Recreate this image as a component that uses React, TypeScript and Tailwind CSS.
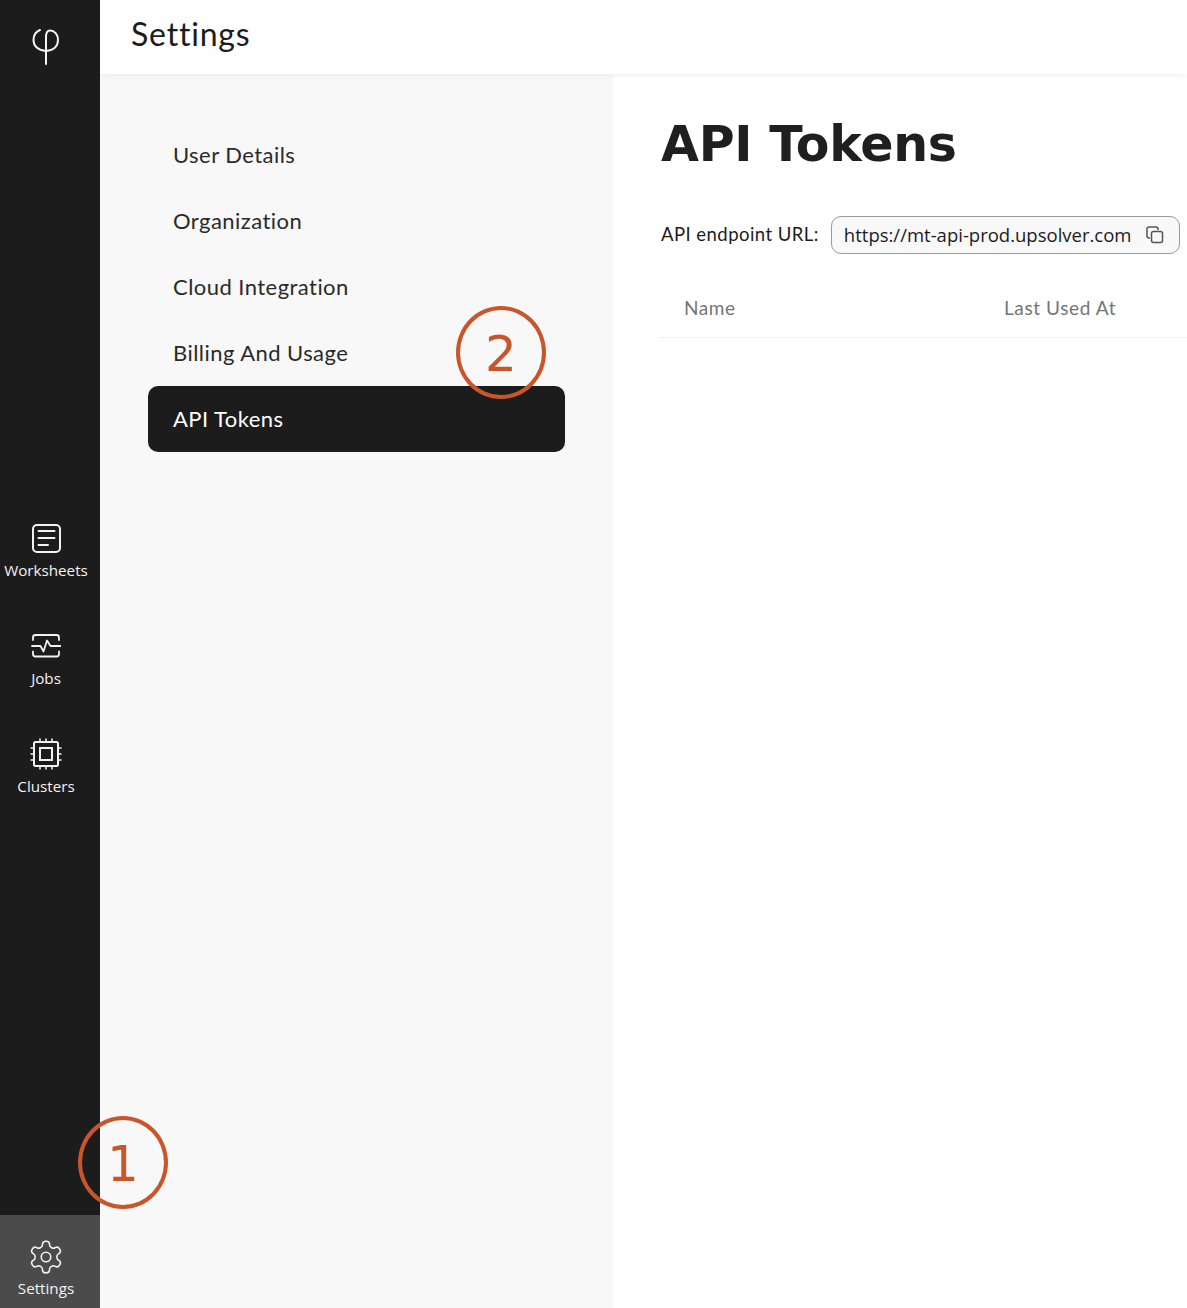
import React from "react";

const Callout = ({ n, className }: { n: string; className: string }) => (
  <div className={`absolute w-[90px] h-[93px] pt-[2px] rounded-[50%] border-[4px] border-[#c9552b] flex items-center justify-center text-[#c9552b] text-[50px] leading-none font-['DejaVu_Sans',sans-serif] font-normal ${className}`}>
    {n}
  </div>
);

const NavIcon = ({ label, children, active, className }: { label: string; children: React.ReactNode; active?: boolean; className: string }) => (
  <div className={`w-[100px] pr-[8px] flex flex-col items-center text-[#f2f2f2] ${active ? "bg-[#4b4b4b]" : ""} ${className}`}>
    {children}
    <span className="text-[15.2px] leading-[20px] font-['Open_Sans',sans-serif] whitespace-nowrap">{label}</span>
  </div>
);

const items = ["User Details", "Organization", "Cloud Integration", "Billing And Usage", "API Tokens"];

export default function App() {
  return (
    <div className="relative flex w-[1187px] h-[1308px] overflow-hidden bg-white font-['Lato',sans-serif] text-[#1c1c1c]">
      <aside className="w-[100px] shrink-0 bg-[#1c1c1c] flex flex-col">
        <div className="h-[522px] pt-[28px] pr-[8px] flex justify-center">
          <svg width="30" height="38" viewBox="0 0 30 38" fill="none" stroke="#f4f4f4" strokeWidth="2" strokeLinecap="round">
            <path d="M9 2C4 4 2.500 8 2.500 12C2.500 18 7 22.500 15 23C23 22.500 27 18 27 12C27 6.500 23.500 2.500 19 2.500C16.500 2.500 15 5 15 9V36" />
          </svg>
        </div>
        <NavIcon label="Worksheets" className="h-[108px] pt-[1px]">
          <svg width="30" height="30" viewBox="0 0 30 30" fill="none" stroke="#f2f2f2" strokeWidth="2" strokeLinecap="round" className="mb-[7px]">
            <rect x="2" y="2" width="27" height="27" rx="4" />
            <path d="M7.500 8H23.500M7.500 15H23.500M7.500 22H17" />
          </svg>
        </NavIcon>
        <NavIcon label="Jobs" className="h-[108px] pt-[1px]">
          <svg width="30" height="30" viewBox="0 0 30 30" fill="none" stroke="#f2f2f2" strokeWidth="1.800" strokeLinecap="round" strokeLinejoin="round" className="mb-[7px]">
            <path d="M2 9V6.500C2 5 3 4 4.500 4H25.500C27 4 28 5 28 6.500V9" />
            <path d="M2 20.500V23C2 24.500 3 25.500 4.500 25.500H25.500C27 25.500 28 24.500 28 23V20.500" />
            <path d="M1 15H9.500L12.500 20.500L16 9.500L19.500 15H29.500" />
          </svg>
        </NavIcon>
        <NavIcon label="Clusters" className="h-[108px] pt-0">
          <svg width="32" height="32" viewBox="0 0 32 32" fill="none" stroke="#f2f2f2" strokeWidth="2" strokeLinecap="round" className="mb-[6px]">
            <rect x="4" y="4" width="24" height="24" rx="1.500" />
            <rect x="10" y="10" width="12" height="12" />
            <path d="M10 1V3.500M16 1V3.500M22 1V3.500M10 28.500V31M16 28.500V31M22 28.500V31M1 10H3.500M1 16H3.500M1 22H3.500M28.500 10H31M28.500 16H31M28.500 22H31" strokeWidth="1.500" />
          </svg>
        </NavIcon>
        <div className="flex-1" />
        <NavIcon label="Settings" active className="h-[93px] pt-[23px]">
          <svg width="38" height="38" viewBox="0 0 24 24" fill="none" stroke="#f2f2f2" strokeWidth="1" strokeLinecap="round" strokeLinejoin="round" className="mb-[2px]">
            <path d="M12.220 2h-.44a2 2 0 0 0-2 2v.18a2 2 0 0 1-1 1.730l-.43.250a2 2 0 0 1-2 0l-.150-.080a2 2 0 0 0-2.730.730l-.220.380a2 2 0 0 0 .730 2.730l.150.100a2 2 0 0 1 1 1.720v.510a2 2 0 0 1-1 1.740l-.150.090a2 2 0 0 0-.730 2.730l.220.380a2 2 0 0 0 2.730.730l.150-.080a2 2 0 0 1 2 0l.430.250a2 2 0 0 1 1 1.730V20a2 2 0 0 0 2 2h.44a2 2 0 0 0 2-2v-.180a2 2 0 0 1 1-1.730l.430-.250a2 2 0 0 1 2 0l.150.080a2 2 0 0 0 2.730-.730l.220-.390a2 2 0 0 0-.730-2.730l-.150-.080a2 2 0 0 1-1-1.740v-.500a2 2 0 0 1 1-1.740l.150-.090a2 2 0 0 0 .730-2.730l-.220-.380a2 2 0 0 0-2.730-.730l-.150.080a2 2 0 0 1-2 0l-.430-.250a2 2 0 0 1-1-1.730V4a2 2 0 0 0-2-2z" />
            <circle cx="12" cy="12" r="3" />
          </svg>
        </NavIcon>
      </aside>

      <div className="flex-1 flex flex-col min-w-0">
        <header className="relative z-10 h-[74px] shrink-0 bg-white pl-[31px] pb-[6px] flex items-center shadow-[0_1px_6px_rgba(0,0,0,0.07)]">
          <h1 className="text-[32px] leading-none font-normal tracking-[0.8px]">Settings</h1>
        </header>
        <div className="flex-1 flex min-h-0">
          <nav className="w-[513px] shrink-0 bg-[#f8f8f8] pt-[48px] pl-[48px] pr-[48px]">
            {items.map((t) => (
              <div
                key={t}
                className={`h-[66px] pl-[25px] pb-[1px] flex items-center text-[22px] tracking-[0.45px] ${t === "API Tokens" ? "bg-[#1c1c1c] text-white rounded-[10px]" : "text-[#2a2a2a]"}`}
              >
                {t}
              </div>
            ))}
          </nav>
          <main className="flex-1 min-w-0 pl-[48px]">
            <h2 className="mt-[40px] text-[49px] leading-[62px] font-['DejaVu_Sans',sans-serif] font-bold tracking-[-0.250px] text-[#1f1f1f] whitespace-nowrap">API Tokens</h2>
            <div className="mt-[40px] flex items-center">
              <span className="text-[18.5px] tracking-[0.45px] whitespace-nowrap">API endpoint URL:</span>
              <div className="ml-[12px] w-[349px] h-[38px] shrink-0 rounded-[10px] border border-[#9a9a9a] bg-[#f8f8f8] pl-[12px] pr-[14px] flex items-center justify-between">
                <span className="text-[18.5px] font-['Open_Sans',sans-serif] whitespace-nowrap">https://mt-api-prod.upsolver.com</span>
                <svg width="20" height="20" viewBox="0 0 20 20" fill="none" stroke="#555" strokeWidth="1.500">
                  <path d="M5 13H4a2 2 0 0 1-2-2V4a2 2 0 0 1 2-2h7a2 2 0 0 1 2 2v1" />
                  <rect x="6.500" y="6.500" width="11" height="11" rx="2" />
                </svg>
              </div>
            </div>
            <div className="mt-[16px] -ml-[2px] h-[68px] pt-[10px] border-b border-[#f0f0f0] flex items-center text-[#757575] text-[19px] tracking-[0.6px]">
              <span className="ml-[25px] w-[320px]">Name</span>
              <span className="whitespace-nowrap">Last Used At</span>
            </div>
          </main>
        </div>
      </div>

      <Callout n="2" className="left-[456px] top-[306px]" />
      <Callout n="1" className="left-[78px] top-[1116px]" />
    </div>
  );
}
